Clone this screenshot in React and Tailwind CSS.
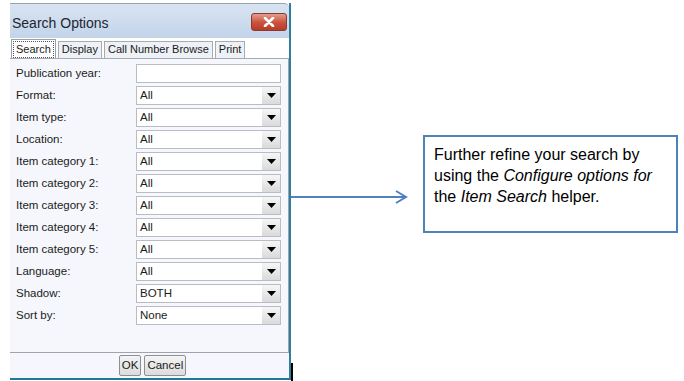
import React from 'react';

const ROWS = [
  ['Format:', 'All'],
  ['Item type:', 'All'],
  ['Location:', 'All'],
  ['Item category 1:', 'All'],
  ['Item category 2:', 'All'],
  ['Item category 3:', 'All'],
  ['Item category 4:', 'All'],
  ['Item category 5:', 'All'],
  ['Language:', 'All'],
  ['Shadow:', 'BOTH'],
  ['Sort by:', 'None'],
];

const TABS = ['Search', 'Display', 'Call Number Browse', 'Print'];

function Select({ value }) {
  return (
    <div className="flex h-[19px] w-[145px] border border-[#b9bcc2] bg-white">
      <div className="flex-1 pl-[3px] leading-[17px]">{value}</div>
      <div className="flex w-[18px] items-center justify-center bg-gradient-to-b from-[#f6f6f6] to-[#dadada]">
        <svg width="9" height="5" viewBox="0 0 9 5">
          <path d="M0 0H9L4.5 5Z" fill="#000" />
        </svg>
      </div>
    </div>
  );
}

function Row({ label, children }) {
  return (
    <div className="flex h-[22px] items-center">
      <div className="w-[126px] pt-[1px] pl-[6px]">{label}</div>
      {children}
    </div>
  );
}

export default function App() {
  return (
    <div className="relative flex h-[381px] w-[684px] overflow-hidden bg-white font-['Liberation_Sans',Arial,sans-serif]">
      <div className="mt-[3px] ml-[10px] flex h-[377px] w-[281px] flex-col border-r-2 border-b-2 border-r-[#2f7f9c] border-b-[#1f7a96] text-[11.5px] text-[#1b1b1b]">
        <div className="flex h-[35px] items-center justify-between rounded-tr-[5px] border-t border-[#9aa3ad] bg-gradient-to-b from-[#d8e4f2] to-[#c3d4ea] pr-[2px] pl-[2px]">
          <span className="mt-[5px] text-[14px] text-[#1e2530]">Search Options</span>
          <div className="mt-[2px] flex h-[18px] w-[36px] items-center justify-center rounded-[3px] border border-[#8a3a30] bg-gradient-to-b from-[#e39d8f] via-[#cc5540] to-[#b83a26]">
            <svg width="12" height="10" viewBox="0 0 12 10">
              <path d="M2 1L10 9M10 1L2 9" stroke="#fff" strokeWidth="2.6" strokeLinecap="round" />
            </svg>
          </div>
        </div>
        <div className="flex h-[20px] items-end gap-[2px] bg-white pl-[1px] text-[11px]">
          {TABS.map((t, i) => (
            <div
              key={t}
              className={
                i === 0
                  ? 'h-[19px] border border-[#9aa0a8] border-b-0 bg-white px-[1px] pt-[1px]'
                  : 'h-[17px] border border-[#a5abb3] border-b-0 bg-[#eef1f6] px-[3px] leading-[15px]'
              }
            >
              {i === 0 ? (
                <div className="border border-dotted border-[#555] px-[2px] leading-[15px]">{t}</div>
              ) : (
                t
              )}
            </div>
          ))}
        </div>
        <div className="flex flex-1 flex-col border-t border-[#a5abb3] bg-[#f6f7fc]">
          <div className="flex-1 border-r border-b border-[#a0a4aa] pt-[3px]">
            <Row label="Publication year:">
              <div className="h-[19px] w-[145px] border border-[#b9bcc2] bg-white" />
            </Row>
            {ROWS.map(([label, value]) => (
              <Row key={label} label={label}>
                <Select value={value} />
              </Row>
            ))}
          </div>
          <div className="flex h-[25px] items-center justify-center gap-[3px] pl-[6px]">
            <div className="h-[21px] rounded-[2px] border border-[#8c9096] bg-gradient-to-b from-[#f4f4f4] to-[#dcdcdc] px-[2px] leading-[19px]">OK</div>
            <div className="h-[21px] rounded-[2px] border border-[#8c9096] bg-gradient-to-b from-[#f4f4f4] to-[#dcdcdc] px-[2px] leading-[19px]">Cancel</div>
          </div>
        </div>
      </div>
      <div className="absolute top-[363px] left-[291px] h-[18px] w-[2px] bg-black" />
      <svg className="mt-[190px] shrink-0" width="118" height="14" viewBox="0 0 118 14">
        <path d="M0 7H114" stroke="#4f81bd" strokeWidth="2" />
        <path d="M105 1L115 7L105 13" stroke="#4f81bd" strokeWidth="2" fill="none" />
      </svg>
      <div className="mt-[135px] ml-[14px] h-[98px] w-[255px] border-2 border-[#4f81bd] pt-[7px] pl-[9px] text-[16px] leading-[21px] text-black">
        Further refine your search by
        <br />
        using the <i>Configure options for</i>
        <br />
        the <i>Item Search</i> helper.
      </div>
    </div>
  );
}
